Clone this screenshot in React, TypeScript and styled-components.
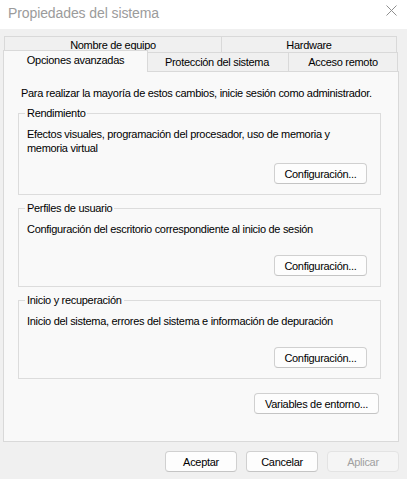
import React from "react";
import styled, { createGlobalStyle } from "styled-components";

const UI_FONT = `"Liberation Sans", Arial, sans-serif`;

const GlobalStyle = createGlobalStyle`
  html, body { margin: 0; padding: 0; background: #f0f0f0; }
  body { font-family: ${UI_FONT}; font-size: 11px; letter-spacing: -0.3px; color: #000; }
  * { box-sizing: border-box; }
`;

const Window = styled.div`
  width: 407px;
  height: 479px;
  display: flex;
  flex-direction: column;
  background: #f0f0f0;
  overflow: hidden;
`;

const TitleBar = styled.div`
  height: 29px;
  flex: none;
  background: #ffffff;
  display: flex;
  align-items: flex-start;
  justify-content: space-between;
  padding: 0 10px 0 8px;
`;

const Title = styled.span`
  font-family: ${UI_FONT};
  font-size: 14px;
  line-height: 16px;
  margin-top: 5px;
  letter-spacing: -0.1px;
  color: #9b9b9b;
`;

const CloseIcon = styled.svg`
  width: 11px;
  height: 11px;
  margin-top: 5px;
`;

const Body = styled.div`
  display: flex;
  flex-direction: column;
  padding: 7px 8px 0 3px;
`;

const TabRow = styled.div`
  display: flex;
  padding-left: 2px;
  height: 17px;
`;

const FrontRow = styled(TabRow)`
  height: 19px;
  align-items: flex-end;
  margin-top: -1px;
`;

const Tab = styled.div<{ $w: number; $active?: boolean }>`
  width: ${(p) => p.$w}px;
  height: 100%;
  display: flex;
  align-items: center;
  justify-content: center;
  border: 1px solid #d9d9d9;
  border-bottom: none;
  margin-left: -1px;
  background: #f0f0f0;
  line-height: 14px;
  padding-bottom: 1px;
  ${(p) =>
    p.$active &&
    `
    position: relative;
    z-index: 2;
    width: ${p.$w + 4}px;
    height: 22px;
    margin: 0 -2px -1px -2px;
    background: #f9f9f9;
    padding-bottom: 4px;
    &:first-child { margin-left: -2px; }
  `}
`;

const Pane = styled.div`
  position: relative;
  z-index: 1;
  width: 396px;
  height: 371px;
  background: #f9f9f9;
  border: 1px solid #d9d9d9;
  padding: 14px 17px 0 14px;
  display: flex;
  flex-direction: column;
`;

const Intro = styled.p`
  margin: 0 0 6px 3px;
  line-height: 14px;
  white-space: nowrap;
`;

const Group = styled.fieldset`
  margin: 0 0 6px 0;
  border: 1px solid #dcdcdc;
  padding: 0 13px 10px 8px;
  min-inline-size: 0;
  display: flex;
  flex-direction: column;
`;

const Legend = styled.legend`
  padding: 0 2px;
  margin-left: -2px;
  line-height: 14px;
`;

const Desc = styled.p<{ $h: number }>`
  margin: 7px 0 0 0;
  line-height: 14px;
  min-height: ${(p) => p.$h}px;
`;

const ButtonRow = styled.div`
  display: flex;
  justify-content: flex-end;
  gap: 9px;
`;

const Button = styled.button<{ $w: number }>`
  width: ${(p) => p.$w}px;
  height: 21px;
  padding: 0;
  font-family: ${UI_FONT};
  font-size: 11px;
  letter-spacing: -0.3px;
  color: #000;
  background: #fdfdfd;
  border: 1px solid #d0d0d0;
  border-bottom-color: #c4c4c4;
  border-radius: 4px;
  &:disabled {
    color: #a0a0a0;
    background: #f5f5f5;
    border-color: #e3e3e3;
  }
`;

const EnvRow = styled(ButtonRow)`
  margin-top: 8px;
  padding-right: 2px;
`;

const Footer = styled(ButtonRow)`
  padding-top: 9px;
  width: 396px;
`;

export default function App() {
  return (
    <Window>
      <GlobalStyle />
      <TitleBar>
        <Title>Propiedades del sistema</Title>
        <CloseIcon viewBox="0 0 11 11">
          <path d="M0.5 0.5 L10.5 10.5 M10.5 0.5 L0.5 10.5" stroke="#8f8f8f" strokeWidth="1" fill="none" />
        </CloseIcon>
      </TitleBar>
      <Body>
        <TabRow>
          <Tab $w={218}>Nombre de equipo</Tab>
          <Tab $w={176}>Hardware</Tab>
        </TabRow>
        <FrontRow>
          <Tab $w={141} $active>Opciones avanzadas</Tab>
          <Tab $w={144}>Protección del sistema</Tab>
          <Tab $w={110}>Acceso remoto</Tab>
        </FrontRow>
        <Pane>
          <Intro>Para realizar la mayoría de estos cambios, inicie sesión como administrador.</Intro>
          <Group>
            <Legend>Rendimiento</Legend>
            <Desc $h={36}>Efectos visuales, programación del procesador, uso de memoria y memoria virtual</Desc>
            <ButtonRow>
              <Button $w={93}>Configuración...</Button>
            </ButtonRow>
          </Group>
          <Group>
            <Legend>Perfiles de usuario</Legend>
            <Desc $h={33}>Configuración del escritorio correspondiente al inicio de sesión</Desc>
            <ButtonRow>
              <Button $w={93}>Configuración...</Button>
            </ButtonRow>
          </Group>
          <Group>
            <Legend>Inicio y recuperación</Legend>
            <Desc $h={33}>Inicio del sistema, errores del sistema e información de depuración</Desc>
            <ButtonRow>
              <Button $w={93}>Configuración...</Button>
            </ButtonRow>
          </Group>
          <EnvRow>
            <Button $w={125}>Variables de entorno...</Button>
          </EnvRow>
        </Pane>
        <Footer>
          <Button $w={72}>Aceptar</Button>
          <Button $w={72}>Cancelar</Button>
          <Button $w={72} disabled>Aplicar</Button>
        </Footer>
      </Body>
    </Window>
  );
}
